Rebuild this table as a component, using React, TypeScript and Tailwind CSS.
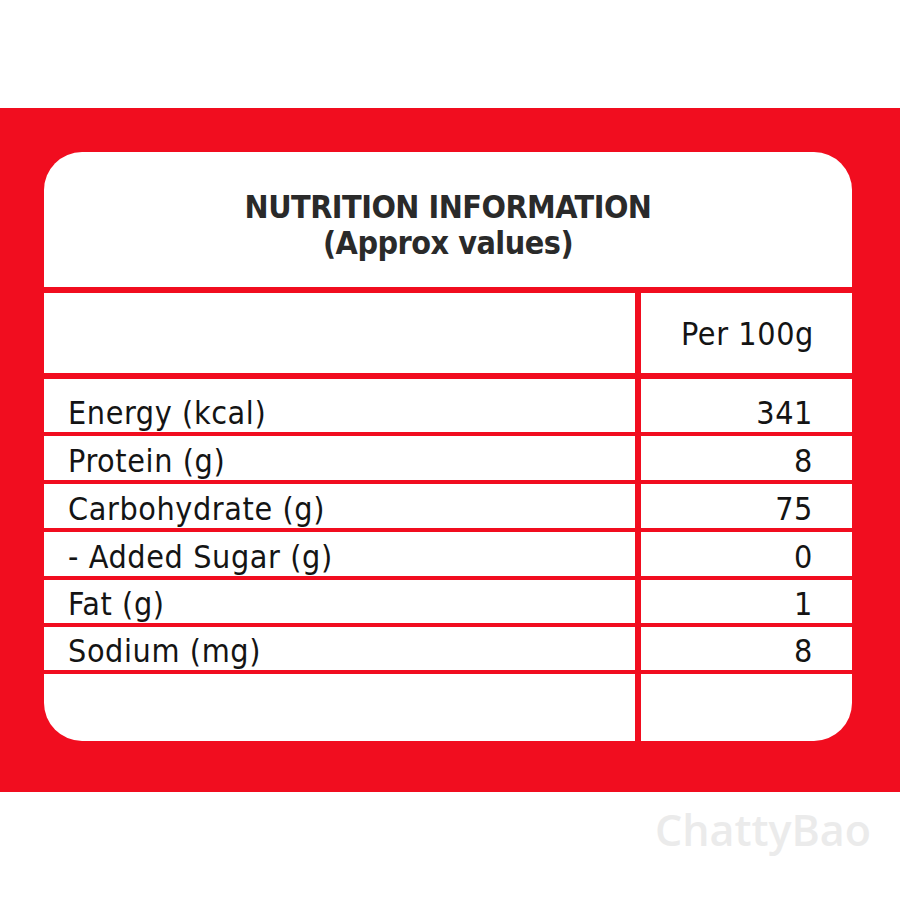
const rows = [
  { label: 'Energy (kcal)', value: '341', h: 'h-[53px]' },
  { label: 'Protein (g)', value: '8', h: 'h-[44px]' },
  { label: 'Carbohydrate (g)', value: '75', h: 'h-[44px]' },
  { label: '- Added Sugar (g)', value: '0', h: 'h-[44px]' },
  { label: 'Fat (g)', value: '1', h: 'h-[43px]' },
  { label: 'Sodium (mg)', value: '8', h: 'h-[43px]' },
];

const Row = ({ label, value, h }: { label: string; value: string; h: string }) => (
  <div className={`flex ${h}`}>
    <div className="w-[591px] flex items-end pl-[24px] pb-[3px] leading-none">{label}</div>
    <div className="w-[6px] bg-[#f10d1f]" />
    <div className="flex-1 flex items-end justify-end pr-[39px] pb-[3px] leading-none">{value}</div>
  </div>
);

export default function App() {
  return (
    <div className="w-[900px] h-[900px] bg-white flex flex-col">
      <div className="h-[108px]" />

      {/* Red band */}
      <div className="h-[684px] bg-[#f10d1f] pt-[44px] pl-[44px]">
        <div
          className="w-[808px] h-[589px] bg-white rounded-[38px] overflow-hidden flex flex-col text-[32px] text-[#141414] tracking-[0.6px]"
          style={{ fontFamily: '"Liberation Sans Narrow", "DejaVu Sans Condensed", "Liberation Sans", sans-serif' }}
        >
          {/* Header */}
          <div className="h-[135px] flex flex-col items-center justify-start pt-[37px] font-bold text-[#2a2a2a] leading-[36px] tracking-[-0.5px]">
            <div>NUTRITION INFORMATION</div>
            <div>(Approx values)</div>
          </div>
          <div className="h-[6px] bg-[#f10d1f]" />

          {/* Column heading */}
          <div className="flex h-[80px]">
            <div className="w-[591px]" />
            <div className="w-[6px] bg-[#f10d1f]" />
            <div className="flex-1 flex items-center justify-center pt-[2px] pl-[2px]">Per 100g</div>
          </div>
          <div className="h-[6px] bg-[#f10d1f]" />

          {rows.map((r) => (
            <div key={r.label}>
              <Row {...r} />
              <div className="h-[4px] bg-[#f10d1f]" />
            </div>
          ))}

          {/* Empty last row */}
          <div className="flex flex-1">
            <div className="w-[591px]" />
            <div className="w-[6px] bg-[#f10d1f]" />
            <div className="flex-1" />
          </div>
        </div>
      </div>

      {/* Watermark */}
      <div className="flex-1 flex justify-end pr-[29px] pt-[16px]">
        <span
          className="text-[43px] leading-none text-[#ebebeb] font-semibold"
          style={{ fontFamily: '"Open Sans", sans-serif' }}
        >
          ChattyBao
        </span>
      </div>
    </div>
  );
}
